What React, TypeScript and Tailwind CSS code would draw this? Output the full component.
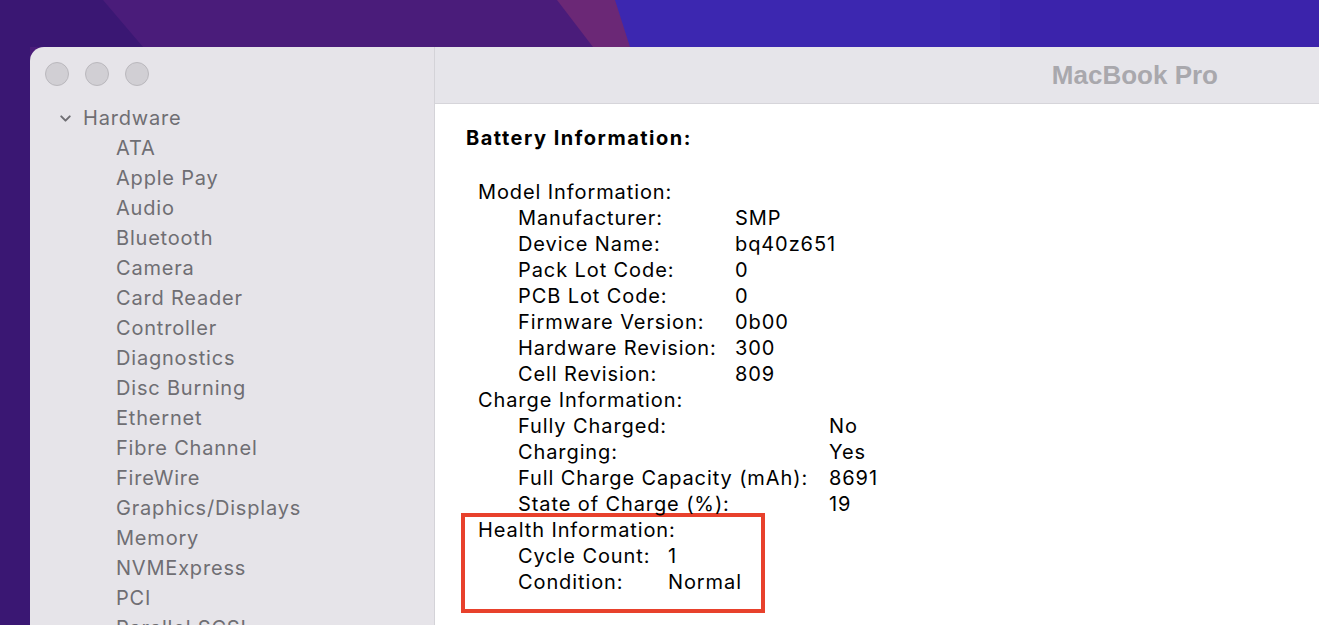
import React from "react";
import { ChevronDown } from "lucide-react";

const sidebarItems = [
  "ATA",
  "Apple Pay",
  "Audio",
  "Bluetooth",
  "Camera",
  "Card Reader",
  "Controller",
  "Diagnostics",
  "Disc Burning",
  "Ethernet",
  "Fibre Channel",
  "FireWire",
  "Graphics/Displays",
  "Memory",
  "NVMExpress",
  "PCI",
  "Parallel SCSI",
];

const modelInfo = [
  ["Manufacturer:", "SMP"],
  ["Device Name:", "bq40z651"],
  ["Pack Lot Code:", "0"],
  ["PCB Lot Code:", "0"],
  ["Firmware Version:", "0b00"],
  ["Hardware Revision:", "300"],
  ["Cell Revision:", "809"],
];

const chargeInfo = [
  ["Fully Charged:", "No"],
  ["Charging:", "Yes"],
  ["Full Charge Capacity (mAh):", "8691"],
  ["State of Charge (%):", "19"],
];

const healthInfo = [
  ["Cycle Count:", "1"],
  ["Condition:", "Normal"],
];

function Rows({ rows, labelWidth }: { rows: string[][]; labelWidth: string }) {
  return (
    <div className="pl-[40px]">
      {rows.map(([label, value]) => (
        <div key={label} className="flex h-[26px] items-center">
          <span className={labelWidth}>{label}</span>
          <span>{value}</span>
        </div>
      ))}
    </div>
  );
}

function Wallpaper() {
  return (
    <svg
      className="absolute inset-0 h-full w-full"
      viewBox="0 0 1319 625"
      preserveAspectRatio="none"
    >
      <rect width="1319" height="625" fill="#4a1c7a" />
      <polygon points="0,0 103,0 143,47 30,47 30,625 0,625" fill="#3a1773" />
      <polygon points="557,0 1319,0 1319,47 593,47" fill="#6b2876" />
      <polygon points="615,0 1319,0 1319,47 630,47" fill="#3c27b0" />
      <polygon points="1000,0 1319,0 1319,47 1000,47" fill="#3a22a8" opacity="0.6" />
    </svg>
  );
}

export default function App() {
  return (
    <div
      className="relative h-[625px] w-full overflow-hidden"
      style={{ fontFamily: "Inter, 'Liberation Sans', sans-serif" }}
    >
      <Wallpaper />
      <div className="relative flex h-full pl-[30px] pt-[47px]">
        {/* Sidebar */}
        <div className="w-[405px] shrink-0 rounded-tl-[14px] border-r border-[#d4d3d8] bg-[#e6e4e9] pt-[15px]">
          <div className="flex gap-[16px] pl-[15px]">
            {[0, 1, 2].map((i) => (
              <div
                key={i}
                className="h-[24px] w-[24px] rounded-full border border-[#bab8bd] bg-[#d1cfd4]"
              />
            ))}
          </div>
          <div className="mt-[17px] text-[20px] tracking-[0.8px] text-[#6f6e73]">
            <div className="flex h-[30px] items-center pl-[27px]">
              <ChevronDown size={17} strokeWidth={2.8} className="text-[#6f6e73]" />
              <span className="ml-[9px]">Hardware</span>
            </div>
            {sidebarItems.map((item) => (
              <div key={item} className="flex h-[30px] items-center pl-[86px]">
                {item}
              </div>
            ))}
          </div>
        </div>

        {/* Main */}
        <div className="flex flex-1 flex-col">
          <div className="flex h-[57px] shrink-0 items-center justify-end border-b border-[#d6d5da] bg-[#e6e5ea] pr-[101px]">
            <span
              className="text-[26px] font-bold text-[#a9a8ad]"
              style={{ fontFamily: "'Liberation Sans', Arial, sans-serif" }}
            >
              MacBook Pro
            </span>
          </div>
          <div className="flex-1 bg-white pl-[31px] pt-[21px] text-[20px] tracking-[0.9px] text-black">
            <div className="flex h-[26px] items-center font-bold tracking-[1.5px]">
              Battery Information:
            </div>
            <div className="mt-[28px] pl-[12px]">
              <div className="flex h-[26px] items-center">Model Information:</div>
              <Rows rows={modelInfo} labelWidth="w-[217px]" />
              <div className="flex h-[26px] items-center">Charge Information:</div>
              <Rows rows={chargeInfo} labelWidth="w-[311px]" />
              <div className="-ml-[17px] -mt-[4px] w-[304px] border-4 border-[#e8412c] pb-[14px] pl-[13px]">
                <div className="flex h-[26px] items-center">Health Information:</div>
                <Rows rows={healthInfo} labelWidth="w-[150px]" />
              </div>
            </div>
          </div>
        </div>
      </div>
    </div>
  );
}
